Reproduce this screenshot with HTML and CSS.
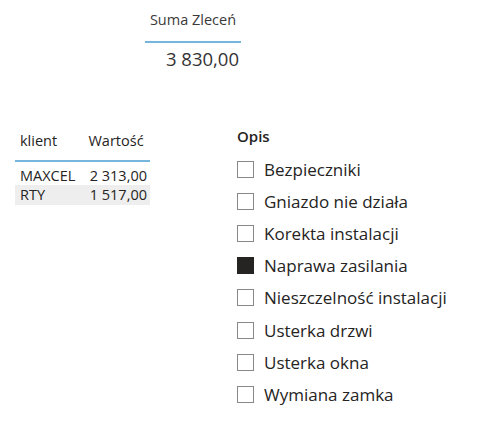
FILE: index.html
```html
<!DOCTYPE html>
<html lang="pl">
<head>
<meta charset="utf-8">
<link rel="stylesheet" href="styles.css">
</head>
<body>
<div class="page">
  <div class="card">
    <div class="card-title">Suma Zleceń</div>
    <div class="card-value">3 830,00</div>
  </div>
  <div class="lower">
    <table class="grid">
      <thead>
        <tr><th class="c1">klient</th><th class="c2">Wartość</th></tr>
      </thead>
      <tbody>
        <tr><td class="c1">MAXCEL</td><td class="c2 num">2 313,00</td></tr>
        <tr class="alt"><td class="c1">RTY</td><td class="c2 num">1 517,00</td></tr>
      </tbody>
    </table>
    <div class="slicer">
      <div class="slicer-title">Opis</div>
      <ul class="items">
        <li class="item"><span class="box"></span><span class="label">Bezpieczniki</span></li>
        <li class="item"><span class="box"></span><span class="label">Gniazdo nie działa</span></li>
        <li class="item"><span class="box"></span><span class="label">Korekta instalacji</span></li>
        <li class="item"><span class="box checked"></span><span class="label">Naprawa zasilania</span></li>
        <li class="item"><span class="box"></span><span class="label">Nieszczelność instalacji</span></li>
        <li class="item"><span class="box"></span><span class="label">Usterka drzwi</span></li>
        <li class="item"><span class="box"></span><span class="label">Usterka okna</span></li>
        <li class="item"><span class="box"></span><span class="label">Wymiana zamka</span></li>
      </ul>
    </div>
  </div>
</div>
</body>
</html>
```
FILE: styles.css
```css
html, body {
  margin: 0;
  padding: 0;
  background: #ffffff;
}
body {
  font-family: "Open Sans", "Noto Sans", "Liberation Sans", sans-serif;
  color: #252423;
}
.page {
  width: 487px;
  height: 423px;
  overflow: hidden;
}
.card {
  margin: 10px 0 0 145px;
  width: 96px;
}
.card-title {
  font-size: 14.5px;
  line-height: 20px;
  text-align: center;
  color: #3b3a39;
  padding-bottom: 11px;
  border-bottom: 2px solid #76b5de;
  white-space: nowrap;
}
.card-value {
  font-size: 18.5px;
  line-height: 24px;
  text-align: right;
  color: #333333;
  padding-top: 4px;
  padding-right: 2px;
  white-space: nowrap;
}
.lower {
  display: flex;
  margin-top: 60px;
}
.grid {
  margin-left: 15px;
  border-collapse: collapse;
  font-size: 14.5px;
  width: 135px;
  align-self: flex-start;
}
.grid th {
  font-weight: normal;
  text-align: left;
  line-height: 20px;
  padding: 0 0 9px 5px;
  border-bottom: 2px solid #76b5de;
  color: #252423;
  white-space: nowrap;
}
.grid th.c2 {
  padding-left: 7px;
}
.grid td {
  line-height: 19px;
  padding: 0 3px 0 5px;
  white-space: nowrap;
}
.grid tbody tr:first-child td {
  padding-top: 4px;
}
.grid tr.alt td {
  line-height: 19px;
  padding-bottom: 1px;
}
.grid td.num {
  text-align: right;
}
.grid tr.alt td {
  background: #eeeeee;
}
.slicer {
  margin-left: 87px;
  margin-top: -6px;
}
.slicer-title {
  font-size: 15px;
  font-weight: 600;
  line-height: 20px;
  margin-top: 1px;
}
.items {
  list-style: none;
  margin: 7px 0 0 0;
  padding: 0;
}
.item {
  display: flex;
  align-items: center;
  height: 32.2px;
}
.box {
  width: 15px;
  height: 15px;
  border: 1px solid #8a8886;
  flex: none;
}
.box.checked {
  background: #252423;
  border-color: #252423;
}
.label {
  margin-left: 10px;
  font-size: 17px;
  color: #252423;
  white-space: nowrap;
}
```
